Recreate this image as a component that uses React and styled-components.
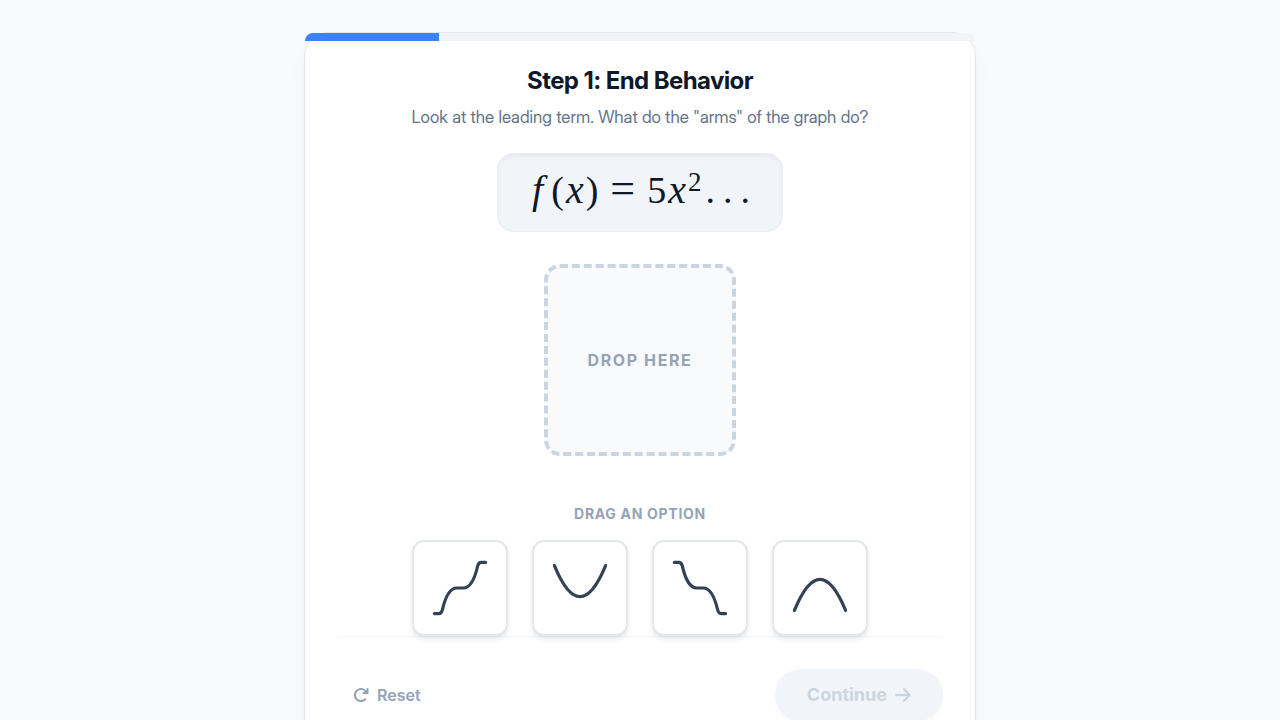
import React, { useState } from "react";
import styled, { createGlobalStyle } from "styled-components";
import { FaArrowRight, FaArrowRotateRight } from "react-icons/fa6";

const options = [
  {
    id: "odd-positive",
    label: "Down on the left, up on the right",
    path: "M10 90 H17 Q21 90 22.5 84 C28 60 35 50 45 50 H55 C65 50 72 40 77.5 16 Q79 10 83 10 H90",
  },
  {
    id: "even-positive",
    label: "Up on both sides",
    path: "M10 15 Q50 112 90 15",
  },
  {
    id: "odd-negative",
    label: "Up on the left, down on the right",
    path: "M10 10 H17 Q21 10 22.5 16 C28 40 35 50 45 50 H55 C65 50 72 60 77.5 84 Q79 90 83 90 H90",
  },
  {
    id: "even-negative",
    label: "Down on both sides",
    path: "M10 85 Q50 -12 90 85",
  },
];

const STEP = 1;
const TOTAL_STEPS = 5;

const Curve = ({ path }) => (
  <CurveSvg viewBox="0 0 100 100" aria-hidden="true">
    <path d={path} />
  </CurveSvg>
);

const App = () => {
  const [answer, setAnswer] = useState(null);
  const dropped = options.find((option) => option.id === answer);

  const handleDrop = (e) => {
    e.preventDefault();
    setAnswer(e.dataTransfer.getData("text/plain"));
  };

  return (
    <>
      <GlobalStyle />
      <Page>
        <Card>
          <ProgressTrack>
            <ProgressFill style={{ width: `${(STEP / TOTAL_STEPS) * 100}%` }} />
          </ProgressTrack>

          <Title>Step 1: End Behavior</Title>
          <Subtitle>
            Look at the leading term. What do the "arms" of the graph do?
          </Subtitle>

          <Formula>
            <Variable $func>f</Variable>
            <span>(</span>
            <Variable>x</Variable>
            <span>)</span>
            <Relation>=</Relation>
            <span>5</span>
            <Variable>x</Variable>
            <Exponent>2</Exponent>
            <Dots>...</Dots>
          </Formula>

          <DropZone onDragOver={(e) => e.preventDefault()} onDrop={handleDrop}>
            {dropped ? <Curve path={dropped.path} /> : "Drop here"}
          </DropZone>

          <OptionsLabel>Drag an option</OptionsLabel>
          <Options>
            {options.map((option) => (
              <OptionCard
                key={option.id}
                type="button"
                draggable
                aria-label={option.label}
                onClick={() => setAnswer(option.id)}
                onDragStart={(e) => e.dataTransfer.setData("text/plain", option.id)}
              >
                <Curve path={option.path} />
              </OptionCard>
            ))}
          </Options>

          <Footer>
            <ResetButton type="button" onClick={() => setAnswer(null)}>
              <FaArrowRotateRight size={16} />
              Reset
            </ResetButton>
            <ContinueButton type="button" disabled={!answer}>
              Continue
              <ArrowIcon />
            </ContinueButton>
          </Footer>
        </Card>
      </Page>
    </>
  );
};

const GlobalStyle = createGlobalStyle`
  * {
    box-sizing: border-box;
  }

  body {
    margin: 0;
    background-color: #f8fafc;
    color: #0f172a;
    font-family: Inter, sans-serif;
    -webkit-font-smoothing: antialiased;
  }

  button {
    font-family: inherit;
    cursor: pointer;
  }
`;

const Page = styled.main`
  display: flex;
  justify-content: center;
  min-height: 100vh;
  padding: 32px 16px;
`;

const Card = styled.section`
  position: relative;
  display: flex;
  flex-direction: column;
  align-items: center;
  width: 100%;
  max-width: 672px;
  padding: 32px;
  background-color: #fff;
  border: 1px solid #e2e8f0;
  border-radius: 24px;
  box-shadow: 0 20px 25px -5px rgba(100, 116, 139, 0.1), 0 8px 10px -6px rgba(100, 116, 139, 0.1);
`;

const ProgressTrack = styled.div`
  position: absolute;
  top: 0;
  left: 0;
  width: 100%;
  height: 8px;
  overflow: hidden;
  background-color: #f1f5f9;
  border-radius: 24px 24px 0 0;
`;

const ProgressFill = styled.div`
  height: 100%;
  background-color: #3b82f6;
`;

const Title = styled.h1`
  margin: 0 0 8px;
  font-size: 24px;
  font-weight: 700;
  line-height: 32px;
  letter-spacing: -0.025em;
`;

const Subtitle = styled.p`
  margin: 0 0 24px;
  color: #64748b;
  font-family: "Inter Display", Inter, sans-serif;
  font-size: 17px;
  line-height: 24px;
  text-align: center;
`;

const Formula = styled.div`
  display: flex;
  align-items: baseline;
  margin-bottom: 32px;
  padding: 12px 32px 18px;
  background-color: #f1f5f9;
  border: 1px solid #e9eef4;
  border-radius: 16px;
  box-shadow: inset 0 2px 4px rgba(0, 0, 0, 0.05);
  font-family: "Liberation Serif", serif;
  font-size: 38px;
  line-height: 45px;
`;

const Variable = styled.i`
  padding: 0 ${(props) => (props.$func ? "8px" : "2px")} 0 2px;
  font-size: 40px;
`;

const Relation = styled.span`
  padding: 0 12px;
  font-size: 44px;
`;

const Exponent = styled.sup`
  align-self: flex-start;
  font-size: 27px;
  line-height: 32px;
`;

const Dots = styled.span`
  margin-right: -8px;
  padding-left: 4px;
  letter-spacing: 8px;
`;

const DropZone = styled.div`
  display: flex;
  align-items: center;
  justify-content: center;
  width: 192px;
  height: 192px;
  margin-bottom: 48px;
  background-color: #f8fafc;
  border: 4px dashed #cbd5e1;
  border-radius: 16px;
  color: #94a3b8;
  font-size: 16px;
  font-weight: 700;
  letter-spacing: 0.1em;
  text-transform: uppercase;
`;

const OptionsLabel = styled.h2`
  margin: 0 0 16px;
  color: #94a3b8;
  font-size: 14px;
  font-weight: 700;
  line-height: 20px;
  letter-spacing: 0.05em;
  text-transform: uppercase;
`;

const Options = styled.div`
  position: relative;
  z-index: 1;
  display: flex;
  flex-wrap: wrap;
  justify-content: center;
  gap: 24px;
`;

const OptionCard = styled.button`
  display: flex;
  align-items: center;
  justify-content: center;
  width: 96px;
  height: 96px;
  padding: 0;
  background-color: #fff;
  border: 2px solid #e2e8f0;
  border-radius: 12px;
  box-shadow: 0 4px 6px -1px rgba(100, 116, 139, 0.15), 0 2px 4px -2px rgba(100, 116, 139, 0.15);
  cursor: grab;
`;

const CurveSvg = styled.svg`
  width: 64px;
  height: 64px;
  fill: none;
  stroke: #334155;
  stroke-width: 5;
  stroke-linecap: round;
  stroke-linejoin: round;
`;

const Footer = styled.footer`
  display: flex;
  align-items: center;
  justify-content: space-between;
  width: 100%;
  padding-top: 32px;
  border-top: 1px solid #f1f5f9;
`;

const ResetButton = styled.button`
  display: flex;
  align-items: center;
  gap: 8px;
  padding: 8px 16px;
  background: none;
  border: none;
  color: #94a3b8;
  font-size: 16px;
  font-weight: 600;
  line-height: 24px;
`;

const ContinueButton = styled.button`
  display: flex;
  align-items: center;
  gap: 8px;
  padding: 12px 32px;
  background-color: #3b82f6;
  border: none;
  border-radius: 999px;
  box-shadow: 0 4px 6px -1px rgba(100, 116, 139, 0.05);
  color: #fff;
  font-size: 18px;
  font-weight: 700;
  line-height: 28px;

  &:disabled {
    background-color: #f1f5f9;
    color: #cbd5e1;
    cursor: not-allowed;
  }
`;

const ArrowIcon = styled(FaArrowRight)`
  width: 16px;
  height: 18px;
`;

export default App;
